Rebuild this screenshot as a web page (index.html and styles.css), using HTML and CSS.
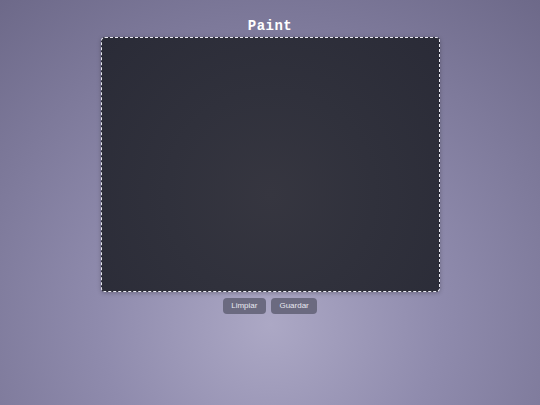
FILE: index.html
```html
<!DOCTYPE html>
<html lang="es">
<head>
<meta charset="utf-8">
<title>Paint</title>
<link rel="stylesheet" href="styles.css">
</head>
<body>
<main class="app">
  <h1 class="title">Paint</h1>
  <div class="board"></div>
  <div class="actions">
    <button class="btn" type="button">Limpiar</button>
    <button class="btn" type="button">Guardar</button>
  </div>
</main>
</body>
</html>
```
FILE: styles.css
```css
html, body {
  margin: 0;
  height: 100%;
}
body {
  background: radial-gradient(circle at 50% 80%, #aca8c5 0%, #8f8bad 40%, #6d6989 100%);
  font-family: "Liberation Sans", Arial, sans-serif;
}
.app {
  display: flex;
  flex-direction: column;
  align-items: center;
  padding-top: 18px;
}
.title {
  margin: 0 0 3px;
  font-family: "Liberation Mono", "Courier New", monospace;
  font-weight: bold;
  font-size: 14px;
  line-height: 16px;
  color: #ffffff;
  letter-spacing: 0.5px;
}
.board {
  width: 337px;
  height: 253px;
  border: 1px dashed #e8e8f0;
  border-radius: 4px;
  background: radial-gradient(circle at 50% 62%, #363640 0%, #30313c 45%, #2a2b37 100%);
  box-shadow: 0 1px 4px rgba(0,0,0,0.25);
}
.actions {
  display: flex;
  gap: 5px;
  margin-top: 6px;
}
.btn {
  background: #6b6a80;
  color: #e8e8f0;
  border: none;
  border-radius: 4px;
  font-family: "Liberation Sans", Arial, sans-serif;
  font-size: 8px;
  height: 16px;
  padding: 0 8.5px;
  line-height: 16px;
}
```
